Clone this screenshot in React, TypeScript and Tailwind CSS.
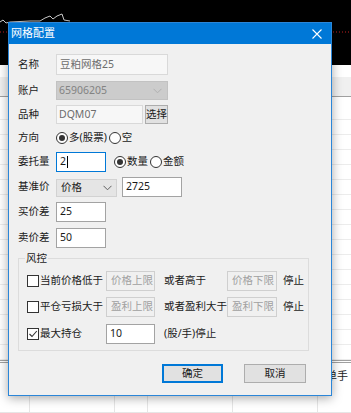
import React from "react";

const Chevron = ({ color = "#606060" }: { color?: string }) => (
  <svg width="9" height="6" viewBox="0 0 9 6">
    <path d="M0.5 0.8 L4.5 4.8 L8.5 0.8" fill="none" stroke={color} strokeWidth="1" />
  </svg>
);

const Radio = ({ checked, label }: { checked?: boolean; label: string }) => (
  <div className="flex items-center">
    <span className="w-[12px] h-[12px] rounded-full border border-[#333] bg-white flex items-center justify-center">
      {checked && <span className="w-[6px] h-[6px] rounded-full bg-[#333]" />}
    </span>
    <span className="ml-[1px]">{label}</span>
  </div>
);

const Check = ({ checked, label, width }: { checked?: boolean; label: string; width: string }) => (
  <div className={`flex items-center ${width}`}>
    <span className="w-[12px] h-[12px] border border-[#333] bg-white flex items-center justify-center shrink-0">
      {checked && (
        <svg width="10" height="10" viewBox="0 0 10 10">
          <path d="M1.5 5 L4 7.5 L8.8 2" fill="none" stroke="#333" strokeWidth="1.1" />
        </svg>
      )}
    </span>
    <span className="ml-[1px] whitespace-nowrap">{label}</span>
  </div>
);

const Field = ({ value, width, focus }: { value: string; width: string; focus?: boolean }) => (
  <div
    className={`${width} h-[20px] bg-white border flex items-center pl-[3px] ${
      focus ? "border-[#0078d7]" : "border-[#a3a3a3]"
    }`}
  >
    {value}
    {focus && <span className="w-px h-[12px] bg-black ml-px" />}
  </div>
);

const Disabled = ({ value, width }: { value: string; width: string }) => (
  <div className={`${width} h-[20px] bg-[#f0f0f0] border border-[#cfcfcf] flex items-center pl-[4px] text-[#a0a0a0]`}>
    {value}
  </div>
);

const Row = ({ label, mt, children }: { label: string; mt: string; children: React.ReactNode }) => (
  <div className={`flex items-center ${mt}`}>
    <span className="w-[38px] shrink-0">{label}</span>
    {children}
  </div>
);

function Background() {
  const rows = Array.from({ length: 16 });
  return (
    <div className="flex flex-col w-full h-full">
      <div className="h-[65px] bg-black relative shrink-0">
        <svg className="absolute inset-0" width="351" height="65">
          <polyline
            points="0,22 3,20 6,23 10,22 30,21 40,21 45,18 50,16 53,19 57,16 62,14 64,20 70,21"
            fill="none"
            stroke="#d0d0d0"
            strokeWidth="1"
          />
          <line x1="0" y1="32" x2="351" y2="32" stroke="#c02020" strokeWidth="1" strokeDasharray="1 2" />
        </svg>
      </div>
      <div className="h-[12px] bg-white shrink-0" />
      <div className="h-[20px] bg-[#f0f0f0] border-b border-[#a0a0a0] shrink-0" />
      <div className="h-[23px] border-b border-[#ececec] shrink-0" />
      {rows.map((_, i) => (
        <div key={i} className="h-[15px] border-b border-[#ececec] shrink-0" />
      ))}
      <div className="h-[3px] border-b border-[#a0a0a0] shrink-0 border-t" />
      <div className="h-[26px] flex items-center justify-end pr-[3px] text-[11px] text-[#222] shrink-0">单手</div>
      <div className="flex-1 flex border-b border-[#e6e6e6]">
        <div className="w-[30px] border-r border-[#e6e6e6]" />
        <div className="w-[85px] border-r border-[#e6e6e6]" />
        <div className="w-[33px] border-r border-[#e6e6e6]" />
        <div className="w-[85px] border-r border-[#e6e6e6]" />
        <div className="w-[85px] border-r border-[#e6e6e6]" />
      </div>
    </div>
  );
}

export default function App() {
  return (
    <div
      className="relative w-[351px] h-[413px] overflow-hidden bg-white text-[10.5px] text-[#1a1a1a]"
      style={{ fontFamily: "'Noto Sans', 'Noto Sans CJK SC', sans-serif" }}
    >
      <Background />

      <div className="absolute left-[8px] top-[22px] w-[324px] h-[374px] border border-[#2b86d8] bg-[#f0f0f0] flex flex-col shadow-[0_2px_10px_rgba(0,0,0,0.35)]">
        <div className="h-[21px] bg-[#0078d7] flex items-center justify-between pl-[2px] pr-[9px] text-white text-[11px] shrink-0">
          <span>网格配置</span>
          <svg width="10" height="10" viewBox="0 0 10 10">
            <path d="M0.5 0.5 L9.5 9.5 M9.5 0.5 L0.5 9.5" stroke="#fff" strokeWidth="1.1" />
          </svg>
        </div>

        <div className="flex flex-col pl-[9px] pt-[10px]">
          <Row label="名称" mt="mt-0">
            <div className="w-[112px] h-[21px] bg-[#f7f7f7] border border-[#d9d9d9] flex items-center pl-[3px] text-[#6d6d6d]">
              豆粕网格25
            </div>
          </Row>

          <Row label="账户" mt="mt-[6px]">
            <div className="w-[112px] h-[19px] bg-[#cccccc] border border-[#c2c2c2] flex items-center justify-between pl-[2px] pr-[5px] text-[#838383]">
              <span>65906205</span>
              <Chevron color="#b0b0b0" />
            </div>
          </Row>

          <Row label="品种" mt="mt-[5px]">
            <div className="w-[87px] h-[19px] bg-[#f7f7f7] border border-[#d9d9d9] flex items-center pl-[2px] text-[#6d6d6d]">
              DQM07
            </div>
            <div className="ml-[2px] w-[23px] h-[19px] bg-[#e1e1e1] border border-[#adadad] flex items-center justify-center">
              选择
            </div>
          </Row>

          <Row label="方向" mt="mt-[4px]">
            <div className="h-[20px] flex items-center gap-[2px]">
              <Radio checked label="多(股票)" />
              <Radio label="空" />
            </div>
          </Row>

          <Row label="委托量" mt="mt-[4px]">
            <Field value="2" width="w-[50px]" focus />
            <div className="ml-[8px] flex items-center gap-[2px]">
              <Radio checked label="数量" />
              <Radio label="金额" />
            </div>
          </Row>

          <Row label="基准价" mt="mt-[5px]">
            <div className="w-[61px] h-[18px] mt-[2px] bg-[#e5e5e5] border border-[#d2d2d2] flex items-center justify-between pl-[4px] pr-[4px]">
              <span>价格</span>
              <Chevron />
            </div>
            <div className="ml-[5px]">
              <Field value="2725" width="w-[60px]" />
            </div>
          </Row>

          <Row label="买价差" mt="mt-[5px]">
            <Field value="25" width="w-[50px]" />
          </Row>

          <Row label="卖价差" mt="mt-[6px]">
            <Field value="50" width="w-[50px]" />
          </Row>

          <div className="relative mt-[10px] w-[291px] h-[93px] border border-[#dcdcdc] flex flex-col pl-[8px] pt-[12px]">
            <span className="absolute left-[6px] top-[-8px] px-[1px] bg-[#f0f0f0]">风控</span>

            <div className="flex items-center">
              <Check label="当前价格低于" width="w-[79px]" />
              <Disabled value="价格上限" width="w-[49px]" />
              <span className="ml-[9px] w-[63px]">或者高于</span>
              <Disabled value="价格下限" width="w-[50px]" />
              <span className="ml-[6px]">停止</span>
            </div>

            <div className="flex items-center mt-[6px]">
              <Check label="平仓亏损大于" width="w-[79px]" />
              <Disabled value="盈利上限" width="w-[49px]" />
              <span className="ml-[9px] w-[63px]">或者盈利大于</span>
              <Disabled value="盈利下限" width="w-[50px]" />
              <span className="ml-[6px]">停止</span>
            </div>

            <div className="flex items-center mt-[7px]">
              <Check checked label="最大持仓" width="w-[79px]" />
              <Field value="10" width="w-[49px]" />
              <span className="ml-[9px]">(股/手)停止</span>
            </div>
          </div>

          <div className="flex justify-end gap-[21px] pr-[25px] mt-[13px]">
            <div className="w-[61px] h-[19px] bg-[#e1e1e1] border-2 border-[#0078d7] flex items-center justify-center">
              确定
            </div>
            <div className="w-[62px] h-[19px] bg-[#e1e1e1] border border-[#adadad] flex items-center justify-center">
              取消
            </div>
          </div>
        </div>
      </div>
    </div>
  );
}
